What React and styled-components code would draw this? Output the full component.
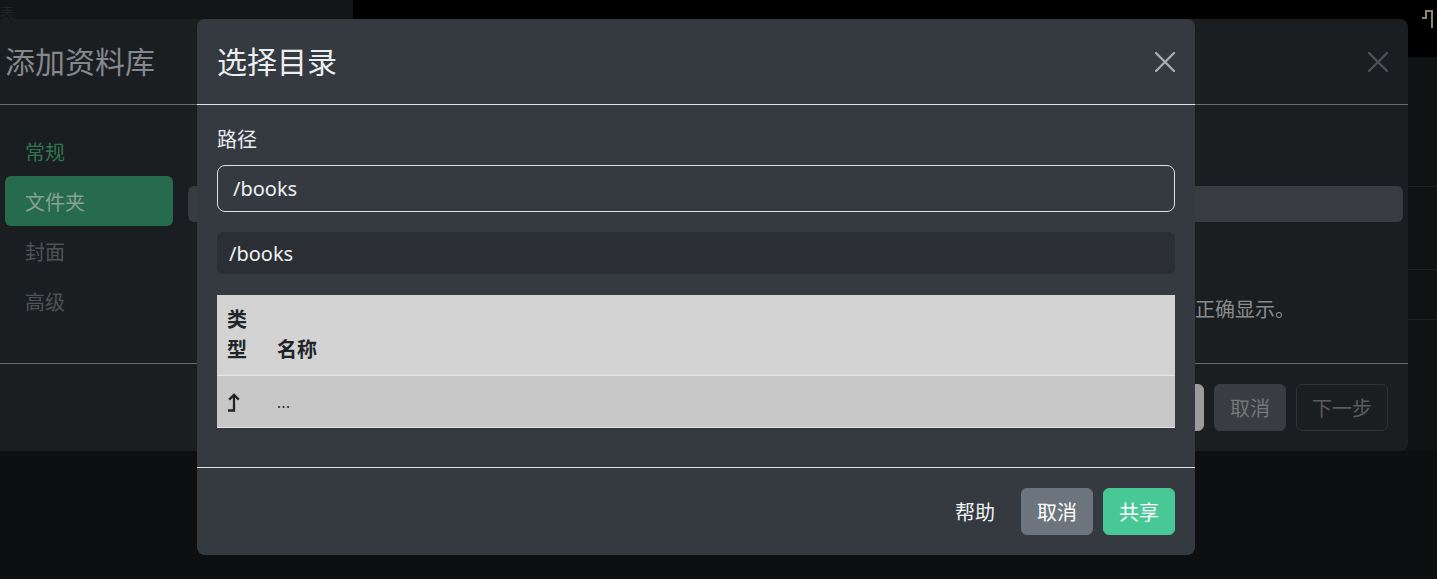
import styled, { createGlobalStyle } from "styled-components";

const GlobalStyle = createGlobalStyle`
  * { box-sizing: border-box; }
  html, body {
    margin: 0;
    padding: 0;
    background: #0e0f11;
    font-family: "Noto Sans", "Noto Sans CJK SC", sans-serif;
    overflow: hidden;
  }
`;

function CloseIcon({ color }) {
  return (
    <svg width="20" height="20" viewBox="0 0 20 20">
      <path
        d="M1 1 L19 19 M19 1 L1 19"
        stroke={color}
        strokeWidth="2.4"
        strokeLinecap="round"
      />
    </svg>
  );
}

function ParentIcon() {
  return (
    <svg width="14" height="20" viewBox="0 0 14 20">
      <path
        d="M1 18.5 H7 V3 M2.2 7.6 L7 2.8 L11.8 7.6"
        stroke="#212529"
        strokeWidth="2.3"
        fill="none"
        strokeLinejoin="miter"
      />
    </svg>
  );
}

export default function App() {
  return (
    <>
      <GlobalStyle />
      <Page>
        <TopBar>
          <SideHead>
            <FaintText>表</FaintText>
          </SideHead>
          <HeadRight>
            <svg width="20" height="22" viewBox="0 0 20 22">
              <path
                d="M2 10 H6 V3 H12 V20"
                stroke="#8b8479"
                strokeWidth="2"
                fill="none"
              />
            </svg>
          </HeadRight>
        </TopBar>
        <Content>
          <BgRow $h={130} />
          <BgRow $h={83} />
          <BgRow $h={50} />
        </Content>

        <BackModal>
          <BackHeader>
            <BackTitle>添加资料库</BackTitle>
            <CloseIcon color="#4d5054" />
          </BackHeader>
          <BackBody>
            <Nav>
              <NavItem $tone="green">常规</NavItem>
              <NavItem $active>文件夹</NavItem>
              <NavItem>封面</NavItem>
              <NavItem>高级</NavItem>
            </Nav>
            <BackPane>
              <BackField />
              <BackNote>正确显示。</BackNote>
            </BackPane>
          </BackBody>
          <BackFooter>
            <BackButton $variant="light">确定</BackButton>
            <BackButton $variant="dark">取消</BackButton>
            <BackButton $variant="outline">下一步</BackButton>
          </BackFooter>
        </BackModal>

        <Modal>
          <Header>
            <Title>选择目录</Title>
            <CloseIcon color="#a9abae" />
          </Header>
          <Body>
            <Label>路径</Label>
            <PathInput defaultValue="/books" />
            <CurrentPath>/books</CurrentPath>
            <Table>
              <thead>
                <tr>
                  <Th $narrow>类型</Th>
                  <Th>名称</Th>
                </tr>
              </thead>
              <tbody>
                <tr>
                  <Td $narrow>
                    <ParentIcon />
                  </Td>
                  <Td>
                    <Dots>...</Dots>
                  </Td>
                </tr>
              </tbody>
            </Table>
          </Body>
          <Footer>
            <Button $variant="link">帮助</Button>
            <Button $variant="secondary">取消</Button>
            <Button $variant="success">共享</Button>
          </Footer>
        </Modal>
      </Page>
    </>
  );
}

const Page = styled.div`
  position: relative;
  width: 1437px;
  height: 579px;
  overflow: hidden;
  background: #0e0f11;
`;

const TopBar = styled.div`
  display: grid;
  grid-template-columns: 353px 1fr;
  height: 57px;
`;

const SideHead = styled.div`
  background: #141517;
  height: 19px;
  overflow: hidden;
`;

const FaintText = styled.span`
  display: block;
  margin-top: 2px;
  font-size: 14px;
  color: #222326;
`;

const HeadRight = styled.div`
  background: #000;
  display: flex;
  justify-content: flex-end;
  align-items: flex-start;
  padding: 8px 0 0;
  margin-right: -3px;
`;

const Content = styled.div`
  background: #111214;
  height: 394px;
  display: flex;
  flex-direction: column;
`;

const BgRow = styled.div`
  height: ${(p) => p.$h}px;
  border-bottom: 1px solid #1d1f22;
`;

/* ---------- dimmed modal behind ---------- */

const BackModal = styled.div`
  position: absolute;
  top: 19px;
  left: -15px;
  width: 1423px;
  height: 432px;
  background: #1b1e21;
  border-radius: 8px;
  display: flex;
  flex-direction: column;
`;

const BackHeader = styled.div`
  height: 86px;
  padding: 0 20px;
  display: flex;
  align-items: center;
  justify-content: space-between;
  border-bottom: 1px solid #696b6e;
`;

const BackTitle = styled.h5`
  margin: 0;
  font-size: 30px;
  font-weight: 400;
  line-height: 45px;
  color: #85888b;
`;

const BackBody = styled.div`
  flex: 1;
  display: grid;
  grid-template-columns: 168px 1fr;
  gap: 15px;
  padding: 21px 20px 0;
`;

const Nav = styled.div`
  display: flex;
  flex-direction: column;
`;

const NavItem = styled.div`
  height: 50px;
  padding: 0 20px;
  display: flex;
  align-items: center;
  font-size: 20px;
  border-radius: 6px;
  color: ${(p) =>
    p.$active ? "#8aa193" : p.$tone === "green" ? "#2d7650" : "#4e5256"};
  background: ${(p) => (p.$active ? "#266b4c" : "transparent")};
`;

const BackPane = styled.div`
  display: flex;
  flex-direction: column;
  padding-top: 60px;
`;

const BackField = styled.div`
  height: 36px;
  margin-right: -15px;
  background: #383b3f;
  border-radius: 6px;
`;

const BackNote = styled.div`
  margin-top: 73px;
  padding-left: 1007px;
  font-size: 20px;
  line-height: 30px;
  color: #8a8b8c;
`;

const BackFooter = styled.div`
  height: 88px;
  border-top: 1px solid #696b6e;
  display: flex;
  align-items: center;
  justify-content: flex-end;
  gap: 10px;
  padding: 0 20px;
`;

const backVariants = {
  light: "background: #9b9b9b; color: #333; border-color: #9b9b9b;",
  dark: "background: #393c40; color: #75777a; border-color: #393c40;",
  outline: "background: transparent; color: #5a5c5f; border-color: #303236;",
};

const BackButton = styled.div`
  height: 47px;
  padding: 0 15px;
  display: flex;
  align-items: center;
  font-size: 20px;
  border: 1px solid;
  border-radius: 6px;
  ${(p) => backVariants[p.$variant]}
`;

/* ---------- active modal ---------- */

const Modal = styled.div`
  position: absolute;
  top: 19px;
  left: 197px;
  width: 998px;
  height: 536px;
  background: #343a40;
  border-radius: 8px;
  display: flex;
  flex-direction: column;
  color: #e9ecef;
`;

const Header = styled.div`
  height: 86px;
  padding: 0 20px;
  display: flex;
  align-items: center;
  justify-content: space-between;
  border-bottom: 1px solid #dee2e6;
`;

const Title = styled.h5`
  margin: 0;
  font-size: 30px;
  font-weight: 400;
  line-height: 45px;
  color: #eceef0;
`;

const Body = styled.div`
  flex: 1;
  padding: 20px 20px 0;
  display: flex;
  flex-direction: column;
`;

const Label = styled.label`
  font-size: 20px;
  line-height: 30px;
  margin-bottom: 10px;
  color: #e9ecef;
`;

const PathInput = styled.input`
  height: 47px;
  padding: 0 15px;
  font-family: "Noto Sans", "Noto Sans CJK SC", sans-serif;
  font-size: 20px;
  color: #eef0f2;
  background: #343a40;
  border: 1px solid #dee2e6;
  border-radius: 8px;
  outline: none;
`;

const CurrentPath = styled.div`
  margin-top: 20px;
  height: 42px;
  padding: 0 12px;
  display: flex;
  align-items: center;
  font-size: 20px;
  color: #eef0f2;
  background: #2b2f34;
  border-radius: 6px;
`;

const Table = styled.table`
  margin-top: 21px;
  width: 100%;
  border-collapse: collapse;
  font-size: 20px;
  line-height: 30px;
  color: #212529;
  border-bottom: 1px solid #e4e4e4;
`;

const Th = styled.th`
  text-align: left;
  vertical-align: bottom;
  font-weight: 700;
  padding: 10px;
  width: ${(p) => (p.$narrow ? "50px" : "auto")};
  word-break: break-all;
  background: #d3d3d3;
  border-bottom: 1px solid #e6e6e6;
`;

const Td = styled.td`
  padding: 10px;
  height: 50px;
  width: ${(p) => (p.$narrow ? "50px" : "auto")};
  background: #c7c7c7;
  vertical-align: middle;

  svg {
    display: block;
  }
`;

const Dots = styled.span`
  font-size: 15px;
  letter-spacing: 0.5px;
`;

const Footer = styled.div`
  height: 88px;
  border-top: 1px solid #dee2e6;
  display: flex;
  align-items: center;
  justify-content: flex-end;
  gap: 10px;
  padding: 0 20px;
`;

const variants = {
  link: "background: transparent; border-color: transparent; color: #f1f3f5;",
  secondary: "background: #6c757d; border-color: #6c757d; color: #fff;",
  success: "background: #48c894; border-color: #48c894; color: #fff;",
};

const Button = styled.button`
  height: 47px;
  padding: 0 15px;
  font-family: "Noto Sans", "Noto Sans CJK SC", sans-serif;
  font-size: 20px;
  border: 1px solid;
  border-radius: 6px;
  ${(p) => variants[p.$variant]}
`;
